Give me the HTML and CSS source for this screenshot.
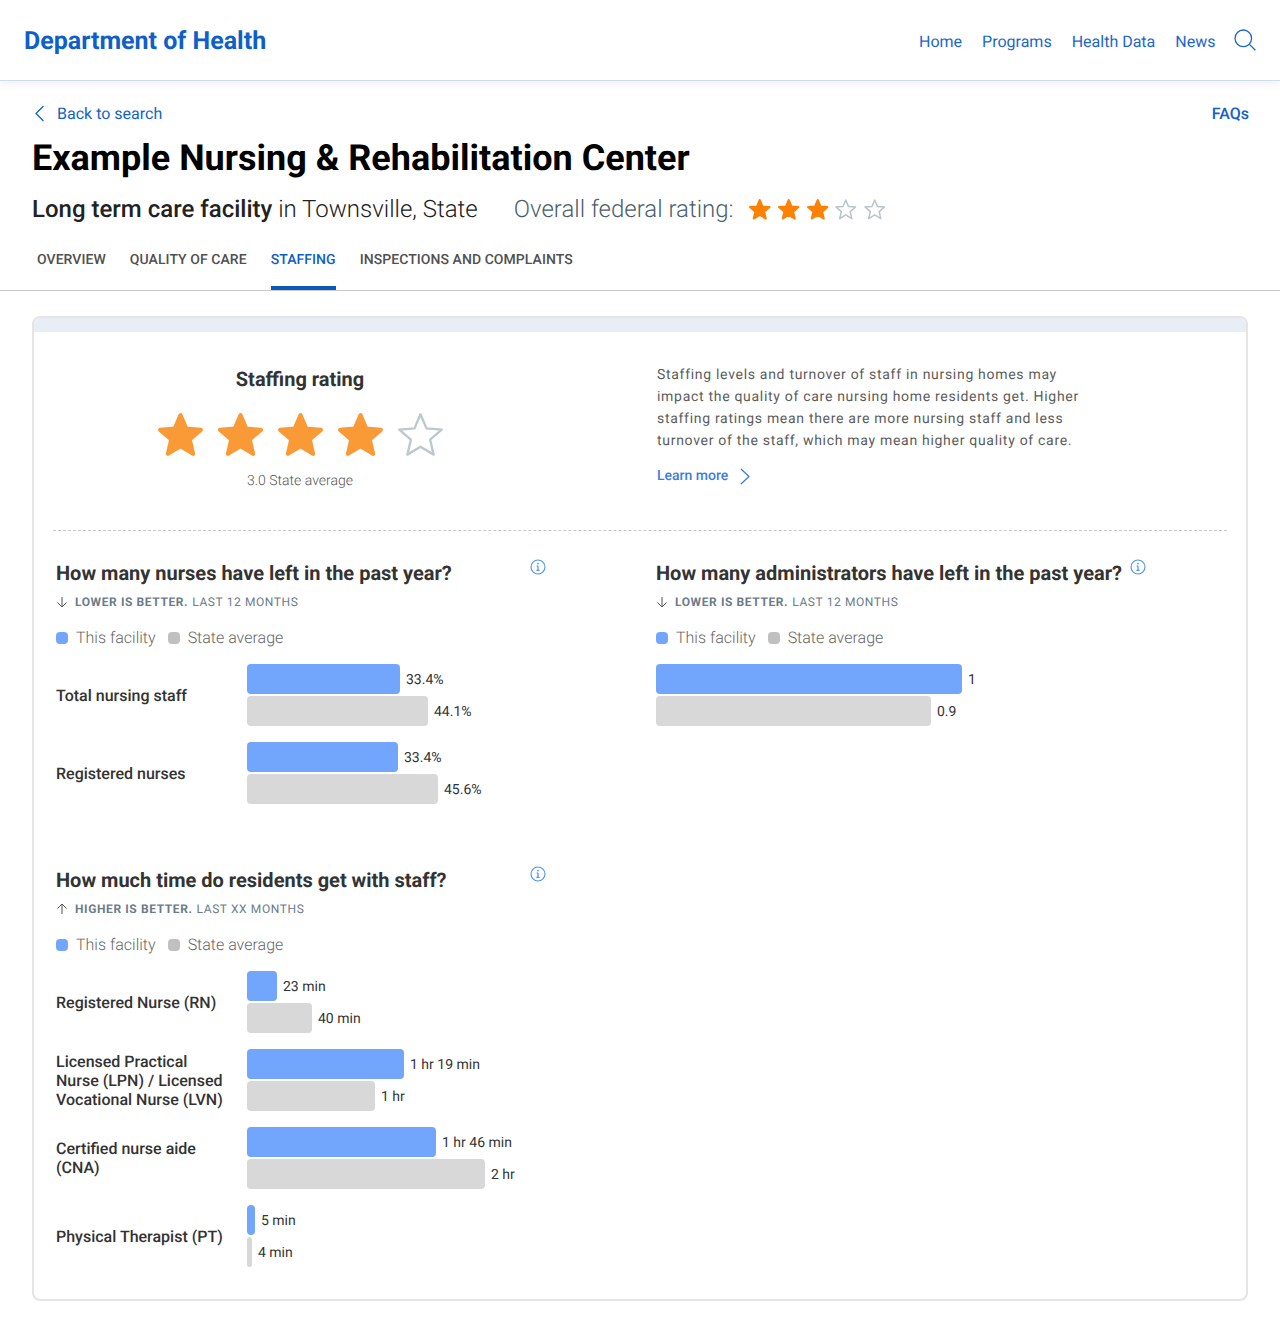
FILE: index.html
```html
<!DOCTYPE html>
<html lang="en">
<head>
    <meta charset="UTF-8">
    <meta name="viewport" content="width=device-width, initial-scale=1.0">
    <title>Example Nursing &amp; Rehabilitation Center</title>
    <link rel="stylesheet" href="styles.css">
</head>
<body>

    <svg class="defs" width="0" height="0">
        <defs>
            <path id="star" d="M12 17.27L18.18 21l-1.64-7.03L22 9.24l-7.19-.61L12 2 9.19 8.63 2 9.24l5.46 4.73L5.82 21z"/>
            <g id="arrowDown"><path d="M6 1v10M1.5 6.5L6 11l4.5-4.5"/></g>
            <g id="arrowUp"><path d="M6 11V1M1.5 5.5L6 1l4.5 4.5"/></g>
            <g id="info">
                <circle cx="8" cy="8" r="7"/>
                <path class="info-stem" d="M8 7v4.2M6.6 7h1.4M6.4 11.4h3.2"/>
                <circle class="info-dot" cx="8" cy="4.6" r="0.9"/>
            </g>
        </defs>
    </svg>

    <header class="site-header">
        <a class="brand">Department of Health</a>
        <nav class="main-nav">
            <a>Home</a>
            <a>Programs</a>
            <a>Health Data</a>
            <a>News</a>
            <svg class="search-icon" width="22" height="22" viewBox="0 0 22 22"><circle cx="9.3" cy="9.3" r="8.3"/><path d="M15.4 15.4l6 5.8"/></svg>
        </nav>
    </header>

    <div class="page-head">
        <div class="crumbs">
            <a class="back-link">
                <svg width="11" height="17" viewBox="0 0 11 17"><path d="M9.5 1L2 8.5l7.5 7.5"/></svg>
                Back to search
            </a>
            <a class="faq-link">FAQs</a>
        </div>
        <h1>Example Nursing &amp; Rehabilitation Center</h1>
        <div class="facility-line">
            <p class="facility-type"><strong>Long term care facility</strong> in Townsville, State</p>
            <p class="federal-label">Overall federal rating:</p>
            <div class="small-stars">
                <svg viewBox="0 0 24 24" class="star-on"><use href="#star"/></svg>
                <svg viewBox="0 0 24 24" class="star-on"><use href="#star"/></svg>
                <svg viewBox="0 0 24 24" class="star-on"><use href="#star"/></svg>
                <svg viewBox="0 0 24 24" class="star-off"><use href="#star"/></svg>
                <svg viewBox="0 0 24 24" class="star-off"><use href="#star"/></svg>
            </div>
        </div>
    </div>

    <nav class="tabs">
        <a>Overview</a>
        <a>Quality of care</a>
        <a class="active">Staffing</a>
        <a>Inspections and complaints</a>
    </nav>

    <main class="card">
        <div class="card-band"></div>

        <section class="summary">
            <div class="rating-box">
                <h2>Staffing rating</h2>
                <div class="big-stars">
                    <svg viewBox="0 0 24 24" class="star-big-on"><use href="#star"/></svg>
                    <svg viewBox="0 0 24 24" class="star-big-on"><use href="#star"/></svg>
                    <svg viewBox="0 0 24 24" class="star-big-on"><use href="#star"/></svg>
                    <svg viewBox="0 0 24 24" class="star-big-on"><use href="#star"/></svg>
                    <svg viewBox="0 0 24 24" class="star-big-off"><use href="#star"/></svg>
                </div>
                <p class="state-avg">3.0 State average</p>
            </div>
            <div class="summary-text">
                <p>Staffing levels and turnover of staff in nursing homes may impact the quality of care nursing home residents get. Higher staffing ratings mean there are more nursing staff and less turnover of the staff, which may mean higher quality of care.</p>
                <a class="learn-more">Learn more
                    <svg width="10" height="17" viewBox="0 0 10 17"><path d="M1 1l8 7.5L1 16"/></svg>
                </a>
            </div>
        </section>

        <div class="charts">
            <section class="chart">
                <div class="chart-title">
                    <h3>How many nurses have left in the past year?</h3>
                    <svg class="info-icon" width="16" height="16" viewBox="0 0 16 16"><use href="#info"/></svg>
                </div>
                <p class="chart-note">
                    <svg width="12" height="12" viewBox="0 0 12 12"><use href="#arrowDown"/></svg>
                    <strong>Lower is better.</strong> Last 12 months
                </p>
                <div class="legend">
                    <span class="key key-blue"></span><span>This facility</span>
                    <span class="key key-grey"></span><span>State average</span>
                </div>
                <div class="row">
                    <div class="row-label">Total nursing staff</div>
                    <div class="bars">
                        <div class="bar-line"><div class="bar blue" style="width:153px"></div><span>33.4%</span></div>
                        <div class="bar-line"><div class="bar grey" style="width:181px"></div><span>44.1%</span></div>
                    </div>
                </div>
                <div class="row">
                    <div class="row-label">Registered nurses</div>
                    <div class="bars">
                        <div class="bar-line"><div class="bar blue" style="width:151px"></div><span>33.4%</span></div>
                        <div class="bar-line"><div class="bar grey" style="width:191px"></div><span>45.6%</span></div>
                    </div>
                </div>
            </section>

            <section class="chart">
                <div class="chart-title">
                    <h3>How many administrators have left in the past year?</h3>
                    <svg class="info-icon" width="16" height="16" viewBox="0 0 16 16"><use href="#info"/></svg>
                </div>
                <p class="chart-note">
                    <svg width="12" height="12" viewBox="0 0 12 12"><use href="#arrowDown"/></svg>
                    <strong>Lower is better.</strong> Last 12 months
                </p>
                <div class="legend">
                    <span class="key key-blue"></span><span>This facility</span>
                    <span class="key key-grey"></span><span>State average</span>
                </div>
                <div class="row">
                    <div class="bars">
                        <div class="bar-line"><div class="bar blue" style="width:306px"></div><span>1</span></div>
                        <div class="bar-line"><div class="bar grey" style="width:275px"></div><span>0.9</span></div>
                    </div>
                </div>
            </section>

            <section class="chart">
                <div class="chart-title">
                    <h3>How much time do residents get with staff?</h3>
                    <svg class="info-icon" width="16" height="16" viewBox="0 0 16 16"><use href="#info"/></svg>
                </div>
                <p class="chart-note">
                    <svg width="12" height="12" viewBox="0 0 12 12"><use href="#arrowUp"/></svg>
                    <strong>Higher is better.</strong> Last XX months
                </p>
                <div class="legend">
                    <span class="key key-blue"></span><span>This facility</span>
                    <span class="key key-grey"></span><span>State average</span>
                </div>
                <div class="row">
                    <div class="row-label">Registered Nurse (RN)</div>
                    <div class="bars">
                        <div class="bar-line"><div class="bar blue" style="width:30px"></div><span>23 min</span></div>
                        <div class="bar-line"><div class="bar grey" style="width:65px"></div><span>40 min</span></div>
                    </div>
                </div>
                <div class="row">
                    <div class="row-label">Licensed Practical Nurse (LPN) / Licensed Vocational Nurse (LVN)</div>
                    <div class="bars">
                        <div class="bar-line"><div class="bar blue" style="width:157px"></div><span>1 hr 19 min</span></div>
                        <div class="bar-line"><div class="bar grey" style="width:128px"></div><span>1 hr</span></div>
                    </div>
                </div>
                <div class="row">
                    <div class="row-label">Certified nurse aide (CNA)</div>
                    <div class="bars">
                        <div class="bar-line"><div class="bar blue" style="width:189px"></div><span>1 hr 46 min</span></div>
                        <div class="bar-line"><div class="bar grey" style="width:238px"></div><span>2 hr</span></div>
                    </div>
                </div>
                <div class="row">
                    <div class="row-label">Physical Therapist (PT)</div>
                    <div class="bars">
                        <div class="bar-line"><div class="bar blue" style="width:8px"></div><span>5 min</span></div>
                        <div class="bar-line"><div class="bar grey" style="width:5px"></div><span>4 min</span></div>
                    </div>
                </div>
            </section>
        </div>
    </main>

</body>
</html>
```

FILE: styles.css
```css
* {
    box-sizing: border-box;
}
body {
    margin: 0;
    font-family: Roboto, Arial, sans-serif;
    text-rendering: geometricPrecision;
    background-color: white;
    color: #333;
    padding-bottom: 27px;
}
h1, h2, h3, p {
    margin: 0;
}
.defs {
    position: absolute;
}
.site-header {
    height: 81px;
    display: flex;
    align-items: center;
    justify-content: space-between;
    padding: 2px 24px 0;
    border-bottom: 1px solid #cfdbe8;
    box-shadow: 0 3px 8px rgba(0, 40, 90, 0.07);
}
.brand {
    font-size: 25px;
    font-weight: 700;
    color: #0f5fc9;
}
.main-nav {
    display: flex;
    align-items: center;
    gap: 20px;
    font-size: 16px;
    color: #1d66cc;
}
.search-icon {
    fill: none;
    stroke: #1d66cc;
    stroke-width: 1.3;
    margin: -2px 0 0 -1.5px;
}
.page-head {
    padding: 0 32px;
}
.crumbs {
    display: flex;
    align-items: center;
    justify-content: space-between;
    padding-top: 23px;
    height: 42px;
}
.back-link {
    display: flex;
    align-items: center;
    gap: 12px;
    padding-left: 2px;
    font-size: 16px;
    color: #1163c9;
}
.back-link svg, .learn-more svg {
    fill: none;
    stroke: currentColor;
    stroke-width: 1.3;
}
.faq-link {
    font-size: 16px;
    font-weight: 500;
    color: #1163c9;
    margin-right: -1px;
}
h1 {
    font-size: 36px;
    line-height: 42px;
    font-weight: 700;
    color: #000;
    margin-top: 14px;
}
.facility-line {
    display: flex;
    align-items: center;
    margin-top: 14px;
    height: 32px;
    font-size: 24px;
    font-weight: 300;
}
.facility-type {
    color: #222;
}
.facility-type strong {
    font-weight: 500;
}
.federal-label {
    margin-left: 36px;
    color: #4d5f6e;
}
.small-stars {
    display: flex;
    margin-left: 14.6px;
    margin-top: 1px;
    gap: 5.25px;
}
.small-stars svg {
    width: 23.5px;
    height: 23.5px;
}
.star-on {
    fill: #fd8204;
    stroke: #fd8204;
    stroke-width: 2;
    stroke-linejoin: round;
}
.star-off {
    fill: white;
    stroke: #b7c3c8;
    stroke-width: 1.5;
    stroke-linejoin: round;
}
.tabs {
    display: flex;
    gap: 24px;
    height: 57px;
    margin-top: 9px;
    padding: 0 37px;
    border-bottom: 1px solid #ccc;
    font-size: 14px;
    font-weight: 500;
    letter-spacing: 0.06px;
    text-transform: uppercase;
    color: #505050;
}
.tabs a {
    height: 56px;
    line-height: 52px;
}
.tabs .active {
    color: #0f5fc9;
    border-bottom: 4px solid #0a58b8;
}
.card {
    margin: 25px 32px 0;
    border: 2px solid #e5e5e5;
    border-radius: 8px;
    height: 985px;
    overflow: hidden;
}
.card-band {
    height: 14px;
    background: #e9edf5;
}
.summary {
    display: flex;
    margin: 0 19px;
    height: 199px;
    border-bottom: 1px dashed #c8c8c8;
}
.rating-box {
    width: 494px;
    text-align: center;
    padding-top: 34px;
}
.rating-box h2 {
    font-size: 20px;
    line-height: 26px;
    font-weight: 700;
    color: #333;
}
.big-stars {
    display: flex;
    justify-content: center;
    gap: 11px;
    margin-top: 19px;
}
.big-stars svg {
    width: 49px;
    height: 49px;
}
.star-big-on {
    fill: #fa9a37;
    stroke: #fa9a37;
    stroke-width: 2;
    stroke-linejoin: round;
}
.big-stars .star-big-off {
    width: 51px;
    height: 51px;
    margin: -1px;
    fill: white;
    stroke: #bcc8cc;
    stroke-width: 1.1;
    stroke-linejoin: round;
}
.state-avg {
    margin-top: 13px;
    font-size: 14px;
    font-weight: 300;
    color: #555;
}
.summary-text {
    width: 430px;
    margin-left: 110px;
    padding-top: 32px;
    font-size: 14px;
    line-height: 22px;
    letter-spacing: 0.7px;
    color: #5c5c5c;
}
.learn-more {
    display: flex;
    align-items: center;
    gap: 12px;
    margin-top: 13px;
    font-weight: 500;
    letter-spacing: 0;
    color: #3a7edb;
}
.charts {
    display: grid;
    grid-template-columns: 600px 1fr;
    grid-template-rows: 307px auto;
    padding: 26px 0 0 22px;
}
.chart-title {
    display: flex;
    justify-content: space-between;
    align-items: flex-start;
    width: 490px;
}
.chart-title h3 {
    font-size: 20px;
    line-height: 32px;
    font-weight: 700;
    color: #333;
}
.info-icon {
    flex: none;
    fill: none;
    stroke: #4a93ee;
    stroke-width: 1.1;
    margin-top: 2px;
}
.info-stem {
    stroke-width: 1.2;
}
.info-dot {
    fill: #4a93ee;
    stroke: none;
}
.chart-note {
    display: flex;
    align-items: center;
    margin-top: 5px;
    font-size: 12px;
    line-height: 16px;
    letter-spacing: 0.6px;
    text-transform: uppercase;
    color: #6b7c8a;
}
.chart-note svg {
    fill: none;
    stroke: #555;
    stroke-width: 1;
    margin-right: 7px;
}
.chart-note strong {
    font-weight: 700;
    margin-right: 4px;
}
.legend {
    display: flex;
    align-items: center;
    margin-top: 16px;
    font-size: 16px;
    line-height: 24px;
    font-weight: 300;
    color: #666;
}
.key {
    width: 12px;
    height: 12px;
    border-radius: 4px;
    margin-right: 8px;
}
.key-blue {
    background: #72a6fc;
}
.key-grey {
    background: #c0c0c0;
    margin-left: 12px;
}
.row {
    display: flex;
    align-items: center;
    margin-top: 14px;
    margin-bottom: 16px;
}
.row + .row {
    margin-top: 0;
}
.row-label {
    width: 191px;
    padding-right: 20px;
    font-size: 16px;
    line-height: 19px;
    font-weight: 500;
    color: #333;
}
.bars {
    display: flex;
    flex-direction: column;
    gap: 2px;
}
.bar-line {
    display: flex;
    align-items: center;
    gap: 6px;
    font-size: 14px;
    color: #333;
}
.bar-line span {
    padding-top: 2px;
}
.bar {
    height: 30px;
    border-radius: 4px;
}
.bar.blue {
    background: #72a6fc;
}
.bar.grey {
    background: #d8d8d8;
}
```
